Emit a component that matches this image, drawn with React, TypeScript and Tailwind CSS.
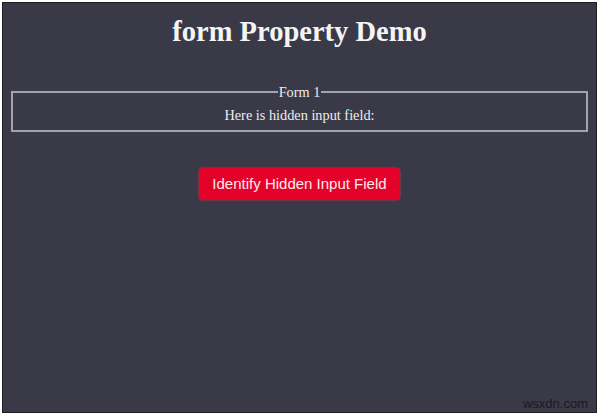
export default function App() {
  return (
    <div className="w-[600px] h-[417px] bg-white pt-[2px] pl-[2px]">
      <div className="relative w-[595px] h-[411px] border border-[#1c1c22] bg-[#3a3947] flex flex-col items-center" style={{ fontFamily: '"Liberation Serif", serif' }}>
        <h1 className="mt-[12px] text-[28.5px] leading-[34px] font-bold text-[#f4f4f4]">form Property Demo</h1>
        <fieldset className="mt-[35px] w-[577px] border-2 border-[#a3a3ab] px-2 pb-[6px] text-center text-[14.3px] text-[#ededed] leading-[18px]">
          <legend className="mx-auto px-[1px] leading-[16px]">Form 1</legend>
          <p className="mt-[6px]">Here is hidden input field:</p>
        </fieldset>
        <button
          className="mt-[36px] h-[32px] w-[201px] rounded-[4px] bg-[#e4022b] text-[15px] text-[#fdeaea] shadow-[0_0_2px_#ff3050]"
          style={{ fontFamily: '"Liberation Sans", Arial, sans-serif' }}
        >
          Identify Hidden Input Field
        </button>
        <div
          className="absolute right-[8px] bottom-[-1px] text-[13px] text-[#1a1a1f]"
          style={{ fontFamily: '"Liberation Sans", Arial, sans-serif' }}
        >
          wsxdn.com
        </div>
      </div>
    </div>
  );
}
